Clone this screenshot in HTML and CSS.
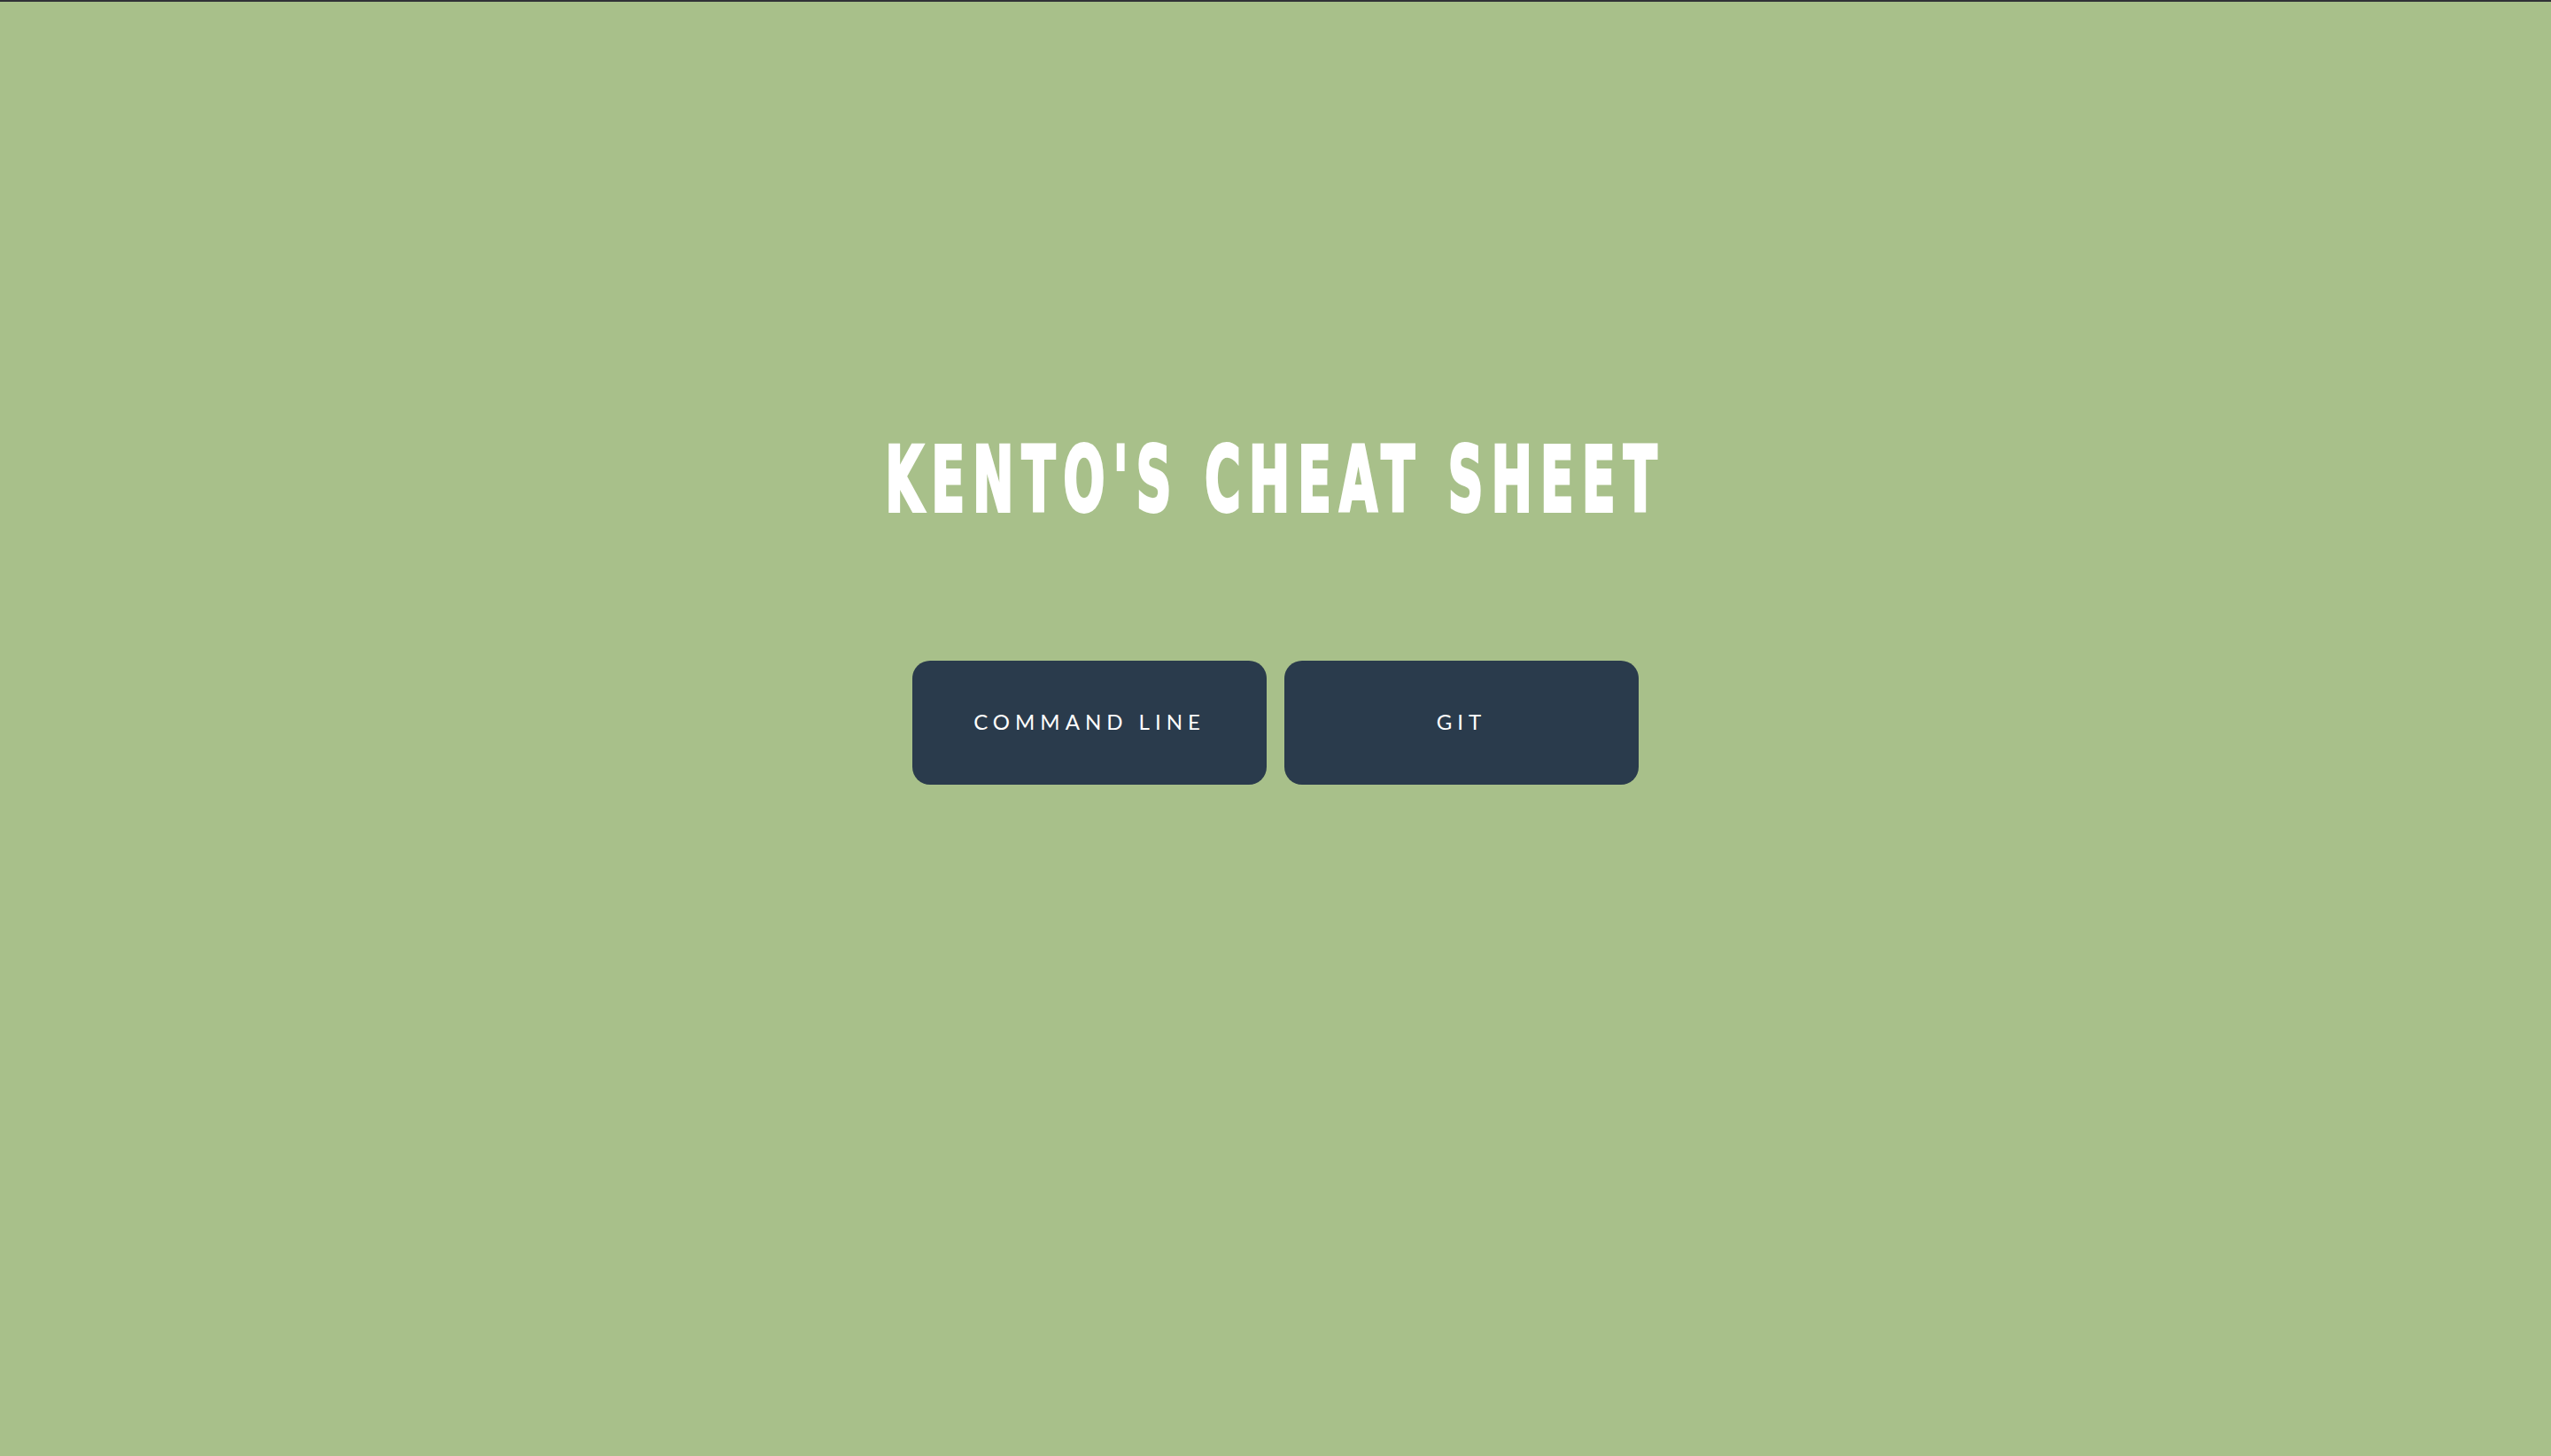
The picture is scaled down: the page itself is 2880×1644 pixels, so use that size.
FILE: index.html
```html
<!DOCTYPE html>
<html lang="en">
<head>
<meta charset="utf-8">
<title>Kento's Cheat Sheet</title>
<link rel="stylesheet" href="styles.css">
</head>
<body>
<main class="page">
  <h1 class="title">KENTO'S CHEAT SHEET</h1>
  <nav class="buttons">
    <a class="btn" href="#">COMMAND LINE</a>
    <a class="btn" href="#">GIT</a>
  </nav>
</main>
</body>
</html>
```

FILE: styles.css
```css
html, body {
  margin: 0;
  padding: 0;
  height: 100%;
}
body {
  background: #a8c08a;
  border-top: 2px solid #303236;
  box-sizing: border-box;
}
.page {
  display: flex;
  flex-direction: column;
  align-items: center;
  padding-top: 480px;
}
.title {
  margin: 0;
  font-family: "DejaVu Sans Condensed", "Liberation Sans", sans-serif;
  font-weight: 700;
  font-size: 102px;
  line-height: 120px;
  letter-spacing: 15.5px;
  color: #ffffff;
  -webkit-text-stroke: 4px #ffffff;
  transform: scaleX(0.6);
  white-space: nowrap;
}
.buttons {
  display: flex;
  gap: 20px;
  margin-top: 144px;
}
.btn {
  display: flex;
  align-items: center;
  justify-content: center;
  width: 400px;
  height: 140px;
  background: #2a3b4c;
  border-radius: 20px;
  color: #ffffff;
  text-decoration: none;
  font-family: Lato, "Liberation Sans", sans-serif;
  font-size: 24px;
  letter-spacing: 6px;
  padding-bottom: 4px;
  box-sizing: border-box;
}
```
